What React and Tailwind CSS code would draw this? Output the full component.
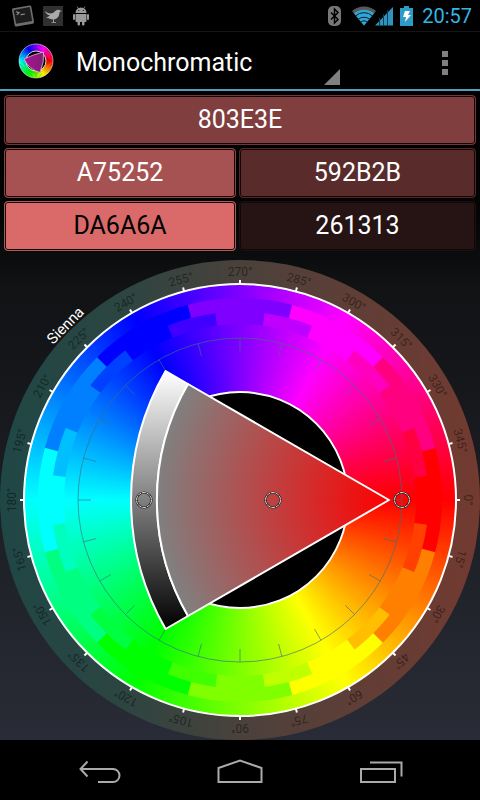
import { clsx } from 'clsx';

const CX = 240;
const CY = 240;

const swatches = [
  { hex: '803E3E', className: 'col-span-2 bg-[#803e3e] border-[#703838] text-white' },
  { hex: 'A75252', className: 'bg-[#a75252] border-[#8b4545] text-white' },
  { hex: '592B2B', className: 'bg-[#592b2b] border-[#4e2828] text-white' },
  { hex: 'DA6A6A', className: 'bg-[#da6a6a] border-[#b05858] text-black' },
  { hex: '261313', className: 'bg-[#261313] border-[#1c1010] text-white' },
];

const polar = (r, deg, cx = CX, cy = CY) => {
  const a = (deg * Math.PI) / 180;
  return [(cx + r * Math.cos(a)).toFixed(2), (cy + r * Math.sin(a)).toFixed(2)];
};

// ring segment between two radii and two angles
const segment = (r0, r1, from, to) => {
  const [ax, ay] = polar(r1, from);
  const [bx, by] = polar(r1, to);
  const [cx, cy] = polar(r0, to);
  const [dx, dy] = polar(r0, from);
  return `M${ax} ${ay}A${r1} ${r1} 0 0 1 ${bx} ${by}L${cx} ${cy}A${r0} ${r0} 0 0 0 ${dx} ${dy}Z`;
};

const range = (count, step) => Array.from({ length: count }, (_, i) => i * step);

const AppLogo = () => (
  <svg viewBox="0 0 36 36" className="size-9 shrink-0" aria-hidden="true">
    {range(72, 5).map((h) => {
      const [x1, y1] = polar(17, h - 3, 18, 18);
      const [x2, y2] = polar(17, h + 3, 18, 18);
      return <path key={h} d={`M18 18L${x1} ${y1}A17 17 0 0 1 ${x2} ${y2}Z`} fill={`hsl(${h} 100% 50%)`} />;
    })}
    <circle cx="18" cy="18" r="17" fill="none" stroke="#ddd" strokeWidth=".6" />
    <circle cx="18" cy="18" r="10" fill="#000" stroke="#fff" strokeWidth=".8" />
    <path d="M6 16Q15 11.500 25.500 9Q26.500 19 22 29.500Q11 26.500 6 16Z" fill="url(#logoFill)" stroke="#e8b8dc" strokeWidth=".8" />
    <defs>
      <linearGradient id="logoFill" x1="0" y1="0" x2="1" y2="0">
        <stop offset="0" stopColor="#b0109a" />
        <stop offset="1" stopColor="#7a2070" />
      </linearGradient>
    </defs>
  </svg>
);

const StatusBar = () => (
  <div className="flex h-8 items-center justify-between border-b border-[#141414] pr-2 pl-[11px]">
    <div className="flex items-center">
      <svg viewBox="0 0 22 22" className="size-6" aria-hidden="true">
        <g transform="rotate(-10 11 11)">
          <rect x="2" y="2.500" width="18" height="17" rx="1.500" fill="#6e6e6e" />
          <rect x="3.500" y="4" width="15" height="13" fill="#1c1c1c" />
          <path d="M5.500 6l2.500 1.500-2.500 1.500M9 9.500h4" fill="none" stroke="#999" />
        </g>
      </svg>
      <svg viewBox="0 0 20 20" className="ml-2 size-5" aria-hidden="true">
        <rect width="20" height="20" fill="#303030" />
        <path d="M2 5c2 2 5 3 8 2 2-1 3-4 6-3l3 1-2.500 1c0 5-3 7-5.500 7.500L11 16h2v.8H8.500V16H10l.3-2.500C7 13 6 11.500 3 12l4-2.500C4 9 2.500 7 2 5z" fill="#aaa" />
      </svg>
      <svg viewBox="0 0 18 20" className="ml-2 size-5" aria-hidden="true">
        <g fill="#999">
          <path d="M3.500 7a5.500 5.500 0 0 1 11 0zM3.500 8h11v7a1 1 0 0 1-1 1h-9a1 1 0 0 1-1-1z" />
          <rect x="1" y="8" width="2" height="6" rx="1" />
          <rect x="15" y="8" width="2" height="6" rx="1" />
          <rect x="5.500" y="14" width="2.500" height="5.500" rx="1" />
          <rect x="10" y="14" width="2.500" height="5.500" rx="1" />
          <path d="M5 .5l2 3M13 .5l-2 3" stroke="#999" strokeWidth=".8" />
        </g>
        <circle cx="6.700" cy="4.500" r=".6" fill="#000" />
        <circle cx="11.300" cy="4.500" r=".6" fill="#000" />
      </svg>
    </div>
    <div className="flex items-center">
      <svg viewBox="0 0 13 20" className="mr-[10px] h-5 w-[13px]" aria-hidden="true">
        <rect width="13" height="20" rx="5" fill="#777" />
        <path d="M3 6.500l7 7-3.500 3.500V3L10 6.500l-7 7" fill="none" stroke="#000" strokeWidth="1.500" />
      </svg>
      <svg viewBox="0 0 42 20" className="mr-[7px] h-5 w-[42px]" aria-hidden="true">
        <path d="M1 5a18 18 0 0 1 24 0L13 19.500z" fill="#585858" />
        <path d="M3 7.300a15.500 15.500 0 0 1 20 0L13 19.500z" fill="#33a5d4" />
        <path d="M4.500 10a12.500 12.500 0 0 1 17 0M7 13.500a9 9 0 0 1 12 0M9.500 16.300a5 5 0 0 1 7 0" fill="none" stroke="#06222e" />
        <path d="M24 19.500L42 1v18.500z" fill="#2f94bd" />
        <path d="M28.500 12v8M32.500 8v12M36.500 4v16" stroke="#0c3d52" />
      </svg>
      <svg viewBox="0 0 13 20" className="mr-[9px] h-5 w-[13px]" aria-hidden="true">
        <path d="M4 0h5v2h4v18H0V2h4z" fill="#2f9bc8" />
        <path d="M5 5h5l-2 4h3l-6 7 1-5H3z" fill="#fff" />
      </svg>
      <span className="text-xl text-[#33b5e5]">20:57</span>
    </div>
  </div>
);

const ActionBar = () => (
  <header className="flex h-[59px] items-center border-b-2 border-[#4fa0bf] pr-8 pl-[18px]">
    <AppLogo />
    <button type="button" className="ml-[22px] flex h-full w-[264px] items-center justify-between pt-1 text-left text-[25px] text-white">
      Monochromatic
      <svg viewBox="0 0 15 15" className="mb-1 size-4 self-end" aria-hidden="true">
        <path d="M15 0v15H0z" fill="#808080" />
      </svg>
    </button>
    <button type="button" aria-label="More options" className="ml-auto flex flex-col gap-[3px] pt-1">
      <span className="size-[6px] bg-[#808080]" />
      <span className="size-[6px] bg-[#808080]" />
      <span className="size-[6px] bg-[#808080]" />
    </button>
  </header>
);

const Marker = ({ x }) => (
  <g fill="none">
    <circle cx={x} cy={CY} r="7.500" stroke="#222" strokeWidth="2.200" />
    <circle cx={x} cy={CY} r="7.500" stroke="#ddd" strokeWidth="1" strokeDasharray="4 .7" />
  </g>
);

const ColorWheel = () => (
  <svg viewBox="0 0 480 480" className="block w-full" role="img" aria-label="Color wheel">
    <defs>
      <linearGradient id="rim">
        <stop offset="0" stopColor="#1f4746" />
        <stop offset=".25" stopColor="#2c4541" />
        <stop offset=".5" stopColor="#4a413b" />
        <stop offset=".75" stopColor="#603e36" />
        <stop offset="1" stopColor="#733a30" />
      </linearGradient>
      <radialGradient id="saturation" gradientUnits="userSpaceOnUse" cx="389" cy="240" r="232">
        <stop offset="0" stopColor="#ff0000" />
        <stop offset="1" stopColor="#808080" />
      </radialGradient>
      <linearGradient id="lightness" x1="0" y1="0" x2="0" y2="1">
        <stop offset="0" stopColor="#fff" />
        <stop offset="1" stopColor="#000" />
      </linearGradient>
    </defs>
    <circle cx={CX} cy={CY} r="240" fill="url(#rim)" />

    {/* hue ring, smooth */}
    {range(360, 1).map((h) => (
      <path key={h} d={segment(100, 216, h - 0.5, h + 1)} fill={`hsl(${h} 100% 50%)`} />
    ))}
    {/* hue ring, 24 and 12 steps */}
    {range(24, 15).map((h) => (
      <path key={h} d={segment(176, 189, h - 7.5, h + 7.6)} fill={`hsl(${h} 100% 50%)`} />
    ))}
    {range(12, 30).map((h) => (
      <path key={h} d={segment(188.5, 202, h - 15, h + 15.1)} fill={`hsl(${h} 100% 50%)`} />
    ))}

    <circle cx={CX} cy={CY} r="108" fill="#000" stroke="#fff" strokeWidth="2" />
    <circle cx={CX} cy={CY} r="216" fill="none" stroke="#fff" strokeWidth="2" />

    <g stroke="#3c7080" strokeOpacity=".65" fill="none">
      <circle cx={CX} cy={CY} r="162" />
      {range(24, 15).map((a) => (
        <path key={a} d={`M${polar(149, a).join(' ')}L${polar(162, a).join(' ')}`} />
      ))}
    </g>

    {range(24, 15).map((a) => (
      <g key={a} transform={`rotate(${a + 90} ${CX} ${CY})`}>
        <path d="M240 24v-4" stroke="#fff" strokeWidth="2" />
        <text x="240" y="16" textAnchor="middle" fontSize="12" fill="#000" fillOpacity=".45">
          {a}°
        </text>
      </g>
    ))}
    <text x="240" y="-2" textAnchor="middle" fontSize="15" fill="#fff" transform={`rotate(-45 ${CX} ${CY})`}>
      Sienna
    </text>

    <g stroke="#fff" strokeWidth="2" strokeLinejoin="round">
      <path d="M165.600 111A258 258 0 0 0 165.600 369L188 356A232 232 0 0 1 188 124Z" fill="url(#lightness)" />
      <path d="M389 240L188 124A232 232 0 0 0 188 356Z" fill="url(#saturation)" />
    </g>

    <Marker x={144} />
    <Marker x={273} />
    <Marker x={402} />
  </svg>
);

const NavBar = () => (
  <nav className="flex items-center justify-between bg-black px-[77px] pt-2 pb-3">
    <button type="button" aria-label="Back">
      <svg viewBox="0 0 46 40" className="h-10 w-[46px]" fill="none" stroke="#aaa" strokeWidth="2">
        <path d="M10.500 13.500l-7 7.500 7 7.500M3.500 21H36a6.500 6.500 0 0 1 0 13H21" />
      </svg>
    </button>
    <button type="button" aria-label="Home">
      <svg viewBox="0 0 46 40" className="h-10 w-[46px]" fill="none" stroke="#aaa" strokeWidth="2">
        <path d="M1.500 34V20L23 12.500 44.500 20v14z" />
      </svg>
    </button>
    <button type="button" aria-label="Recent apps">
      <svg viewBox="0 0 46 40" className="h-10 w-[46px]" fill="none" stroke="#aaa" strokeWidth="2">
        <path d="M4 21h34v13H4zM13 14.500h31.500v14" />
      </svg>
    </button>
  </nav>
);

const App = () => (
  <div className="flex min-h-screen flex-col bg-black font-[Roboto,sans-serif]">
    <StatusBar />
    <ActionBar />
    <main className="bg-linear-to-b from-black via-[#101214] via-30% to-[#292c36]">
      <div className="grid grid-cols-[232fr_237fr] gap-x-[3px] gap-y-[3px] px-1 pt-1 pb-[9px]">
        {swatches.map(({ hex, className }) => (
          <button
            key={hex}
            type="button"
            className={clsx('h-[50px] rounded-sm border text-[25px] inset-shadow-[0_0_0_1px_#140606]', className)}
          >
            {hex}
          </button>
        ))}
      </div>
      <ColorWheel />
    </main>
    <NavBar />
  </div>
);

export default App;
